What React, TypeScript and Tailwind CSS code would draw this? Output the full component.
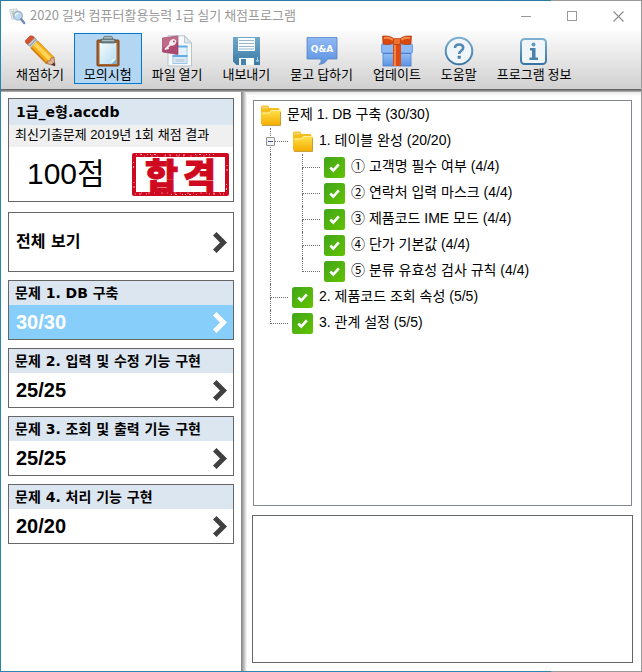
import type { ReactNode } from "react";

const malgun = "font-['Noto_Sans_CJK_KR','Noto_Sans',sans-serif]";
const gulim = "font-['Liberation_Sans','Noto_Sans_CJK_KR',sans-serif]";
const gulimBold = "font-['DejaVu_Sans','Noto_Sans_CJK_KR',sans-serif] font-bold";

function AppIcon() {
  return (
    <svg width="17" height="17" viewBox="0 0 17 17" aria-hidden="true">
      <path d="M.5 1.500 L8 .8 L11 9 L3 11.500 Z" fill="#e4e8ec" stroke="#c6ccd1" strokeWidth=".8" />
      <path d="M2.500 4 L5 3.600 M3 6 L5 5.700 M3.500 8 L5 7.800" stroke="#8cc897" strokeWidth="1.200" />
      <circle cx="9" cy="7.800" r="4.300" fill="#b9d9f3" stroke="#a3b1c6" strokeWidth="1.300" />
      <path d="M6.500 7.800 A2.600 2.600 0 0 1 9.500 5.300" stroke="#fff" strokeWidth="1.200" fill="none" />
      <path d="M12.200 11.200 L15.200 15" stroke="#7089b4" strokeWidth="2.400" strokeLinecap="round" />
    </svg>
  );
}

function PencilIcon() {
  return (
    <svg width="32" height="32" viewBox="0 0 32 32" aria-hidden="true">
      <path d="M1.500 5.500 L6 1 Q8 .3 10 2.200 L11.500 4 L4.500 10.200 L2 8 Q1 6.800 1.500 5.500Z" fill="#d9502e" stroke="#a83c22" strokeWidth=".6" />
      <path d="M4 9.500 L10.500 3 L13.500 5.800 L7 12.600Z" fill="#c9ced3" stroke="#82898f" strokeWidth=".6" />
      <path d="M5.700 11 L12.100 4.400" stroke="#6f767c" strokeWidth=".8" />
      <path d="M7 12.600 L13.500 5.800 L30 22.400 L31 30.500 L22.800 28.600Z" fill="#f6ad1c" />
      <path d="M9.500 10.200 L12 7.500 L28.600 23.800 L25.400 26.200Z" fill="#ffd65a" />
      <path d="M7 12.600 L22.800 28.600" stroke="#d27a08" strokeWidth="1.600" />
      <path d="M13.500 5.800 L30 22.400" stroke="#de8c0c" strokeWidth="1" />
      <path d="M22.800 28.600 L23.500 25.800 L26 25.800 L26.600 23.400 L30 22.400 L31 30.800Z" fill="#dfb18d" stroke="#8a5d45" strokeWidth=".7" />
      <path d="M27.300 29.800 L30.400 27.200 L31.200 31Z" fill="#4b2a28" />
    </svg>
  );
}

function ClipboardIcon() {
  return (
    <svg width="32" height="32" viewBox="0 0 32 32" aria-hidden="true">
      <defs>
        <linearGradient id="paper" x1="0" y1="0" x2="1" y2="1">
          <stop offset="0" stopColor="#f2fbfe" />
          <stop offset="1" stopColor="#b5dcf1" />
        </linearGradient>
      </defs>
      <rect x="5" y="5" width="22" height="26" rx="1" fill="#a8622b" stroke="#7b4018" />
      <path d="M7.500 8 H24.500 V29 H7.500Z" fill="url(#paper)" />
      <path d="M19 29 L24.500 23.500 V29Z" fill="#7fb4d2" />
      <path d="M19 29 L20 24.500 L24.500 23.500Z" fill="#e8f6fc" />
      <rect x="9" y="4" width="14" height="4" rx="1" fill="#6f8589" stroke="#4a5d62" strokeWidth=".7" />
      <path d="M11.500 4 V2.600 Q11.500 1.300 13 1.300 H19 Q20.500 1.300 20.500 2.600 V4Z" fill="#a7b7b9" stroke="#56686c" strokeWidth=".7" />
      <path d="M10 5.400 H22" stroke="#b9c9cb" />
    </svg>
  );
}

function AccessIcon() {
  return (
    <svg width="32" height="32" viewBox="0 0 32 32" aria-hidden="true">
      <path d="M7 .8 H23.500 L30.500 8 V31 H7Z" fill="#f7fafd" stroke="#b9c3cc" />
      <path d="M23.500 .8 V8 H30.500Z" fill="#dfe6ec" stroke="#b3bec8" strokeWidth=".8" />
      <rect x="14" y="11.500" width="12" height="9" fill="#e5f1fb" stroke="#9ec9e8" />
      <path d="M13.500 11.500 H26.500" stroke="#62aee0" strokeWidth="2" />
      <rect x="12" y="21" width="14" height="7.500" fill="#dbe9f6" stroke="#9ec9e8" />
      <path d="M11.500 21 H26.500" stroke="#62aee0" strokeWidth="2" />
      <path d="M14.500 25.500 H23.500" stroke="#c3d5e3" strokeWidth="3" />
      <path d="M1.500 3 L17 1 V19.500 L1.500 17Z" fill="#ae4a70" stroke="#8e3558" strokeWidth=".6" />
      <path d="M1.500 3 L17 1 V7 L1.500 13Z" fill="#c77895" opacity=".7" />
      <path d="M8 8.500 Q8.500 4.500 12.500 4 Q16 4.500 15 8 Q13.500 11.500 9.500 10.500Z" fill="#f8edf1" />
      <path d="M9.500 9.500 L4 14.500 M6 12.500 L7.500 14" stroke="#f8edf1" strokeWidth="1.800" fill="none" />
      <circle cx="13" cy="6.500" r="1" fill="#ae4a70" />
    </svg>
  );
}

function FloppyIcon() {
  return (
    <svg width="32" height="32" viewBox="0 0 32 32" aria-hidden="true">
      <defs>
        <linearGradient id="disk" x1="0" y1="0" x2="0" y2="1">
          <stop offset="0" stopColor="#6fa9cc" />
          <stop offset="1" stopColor="#3c7aa5" />
        </linearGradient>
      </defs>
      <path d="M3 2 H30 V30 H6.500 L3 26.500Z" fill="url(#disk)" />
      <path d="M8 3 H25 V16 H8Z" fill="#f8fcfe" />
      <path d="M9 5.500 H24 M9 8.500 H24 M9 11.500 H24 M9 14 H24" stroke="#9db8c8" />
      <path d="M9 23 H24 V30 H9Z" fill="#f5fafd" />
      <path d="M11 24 H16 V30 H11Z" fill="#4681aa" />
      <path d="M27.500 22 V26 M26 25 L27.500 27 L29 25" stroke="#a5cbe2" fill="none" />
    </svg>
  );
}

function QnaIcon() {
  return (
    <svg width="32" height="32" viewBox="0 0 32 32" aria-hidden="true">
      <defs>
        <linearGradient id="bubble" x1="0" y1="0" x2="0" y2="1">
          <stop offset="0" stopColor="#8fb9f4" />
          <stop offset="1" stopColor="#5a92e0" />
        </linearGradient>
      </defs>
      <path d="M1 2.500 H31 V24 H21.500 Q20 28.500 13 29.500 Q16 27.500 15 24 H1Z" fill="url(#bubble)" stroke="#5581c0" strokeWidth=".8" />
      <text x="16" y="17" textAnchor="middle" fontSize="9" fontWeight="700" fill="#fff" fontFamily="DejaVu Sans, sans-serif">Q&amp;A</text>
    </svg>
  );
}

function GiftIcon() {
  return (
    <svg width="34" height="32" viewBox="0 0 34 32" aria-hidden="true">
      <defs>
        <linearGradient id="box" x1="0" y1="0" x2="0" y2="1">
          <stop offset="0" stopColor="#9dc6fa" />
          <stop offset="1" stopColor="#5b93e2" />
        </linearGradient>
      </defs>
      <rect x="3" y="16" width="28" height="15" fill="url(#box)" stroke="#4a7fce" strokeWidth=".8" />
      <rect x="1.500" y="9" width="31" height="9" rx="1" fill="#8db9f5" stroke="#5e91da" strokeWidth=".8" />
      <path d="M3 18.500 H31" stroke="#4a80cd" />
      <rect x="13" y="9" width="8" height="22" fill="#dd4b16" />
      <path d="M15 10 V31" stroke="#f58342" strokeWidth="2" />
      <path d="M16 6 C11 0 7 1 2.500 1 L3 9 C8 10 12 10 16 6Z" fill="#d9480f" stroke="#a83308" strokeWidth=".6" />
      <path d="M18 6 C23 0 27 1 31.500 1 L31 9 C26 10 22 10 18 6Z" fill="#d9480f" stroke="#a83308" strokeWidth=".6" />
      <path d="M4 3 Q9 2 13 5 M30 3 Q25 2 21 5" stroke="#f58a4a" strokeWidth="1.800" fill="none" />
      <rect x="13.500" y="3.500" width="7" height="6" rx="1.500" fill="#f07030" stroke="#b33c0c" strokeWidth=".7" />
    </svg>
  );
}

function BlueRingGradient({ id }: { id: string }) {
  return (
    <defs>
      <linearGradient id={id} x1="0" y1="0" x2="0" y2="1">
        <stop offset="0" stopColor="#7db0d0" />
        <stop offset="1" stopColor="#3874a3" />
      </linearGradient>
    </defs>
  );
}

function HelpIcon() {
  return (
    <svg width="32" height="32" viewBox="0 0 32 32" aria-hidden="true">
      <BlueRingGradient id="help" />
      <circle cx="16" cy="16" r="13.300" fill="#eff5f9" stroke="url(#help)" strokeWidth="2" />
      <path d="M12 13 Q12 9.500 16 9.500 Q20.200 9.500 20.200 12.800 Q20.200 14.500 18 16 Q16.200 17.200 16.200 19" fill="none" stroke="#5289b1" strokeWidth="2.600" />
      <rect x="14.700" y="20.800" width="3" height="3" rx=".5" fill="#457fa9" />
    </svg>
  );
}

function InfoIcon() {
  return (
    <svg width="32" height="32" viewBox="0 0 32 32" aria-hidden="true">
      <BlueRingGradient id="info" />
      <rect x="3" y="4" width="25" height="25" rx="3.500" fill="#eff5f9" stroke="url(#info)" strokeWidth="2" />
      <circle cx="15.500" cy="9.500" r="2" fill="#6198bf" />
      <path d="M12 13 H17.500 V22.500 H20 V25 H11.500 V22.500 H14 V15.500 H12Z" fill="#4a82ac" />
    </svg>
  );
}

function FolderIcon() {
  return (
    <svg width="20" height="22" viewBox="0 0 20 22" className="shrink-0" aria-hidden="true">
      <defs>
        <linearGradient id="folder" x1="0" y1="0" x2="0" y2="1">
          <stop offset="0" stopColor="#ffe14a" />
          <stop offset="1" stopColor="#f4ac00" />
        </linearGradient>
      </defs>
      <path d="M0 3 Q0 1.500 1.500 1.500 H6.500 Q8 1.500 8 3 V4 H17 Q18.500 4 18.500 6 V20 H1 Q0 20 0 19Z" fill="#f3bd1c" />
      <path d="M1 2.500 H7 V4.500 H1Z" fill="#f7d36c" />
      <path d="M1.500 8.500 H8 L10 6 H18.500 Q20 6 20 7.500 V20 Q20 21.500 18.500 21.500 H2 Q.5 21.500 .5 20 V9.500Z" fill="url(#folder)" />
      <path d="M1 9 H8.500 L10.500 6.500 H19" stroke="#fff0a0" fill="none" />
      <path d="M1 21.500 H19.500 V8" stroke="#ba9338" fill="none" strokeWidth=".8" />
    </svg>
  );
}

function CheckIcon() {
  return (
    <svg width="21" height="21" viewBox="0 0 21 21" className="shrink-0" aria-label="정답" role="img">
      <defs>
        <linearGradient id="ok" x1="0" y1="0" x2="1" y2="1">
          <stop offset="0" stopColor="#41a51b" />
          <stop offset="1" stopColor="#62c300" />
        </linearGradient>
      </defs>
      <rect width="21" height="21" rx="2.500" fill="url(#ok)" />
      <path d="M6.300 10.500 L9.300 13.500 L14.800 7.300" stroke="#fff" strokeWidth="2.600" fill="none" />
    </svg>
  );
}

function Chevron() {
  return (
    <svg width="14" height="21" viewBox="0 0 14 21" className="shrink-0" aria-hidden="true">
      <path d="M0 3.500 L3.500 0 L14 10.500 L3.500 21 L0 17.500 L7 10.500Z" fill="currentColor" />
    </svg>
  );
}

const tools: { label: string; icon: ReactNode; active?: boolean }[] = [
  { label: "채점하기", icon: <PencilIcon /> },
  { label: "모의시험", icon: <ClipboardIcon />, active: true },
  { label: "파일 열기", icon: <AccessIcon /> },
  { label: "내보내기", icon: <FloppyIcon /> },
  { label: "묻고 답하기", icon: <QnaIcon /> },
  { label: "업데이트", icon: <GiftIcon /> },
  { label: "도움말", icon: <HelpIcon /> },
  { label: "프로그램 정보", icon: <InfoIcon /> },
];

const sections = [
  { title: "문제 1. DB 구축", score: "30/30", active: true },
  { title: "문제 2. 입력 및 수정 기능 구현", score: "25/25" },
  { title: "문제 3. 조회 및 출력 기능 구현", score: "25/25" },
  { title: "문제 4. 처리 기능 구현", score: "20/20" },
];

const details = [
  "① 고객명 필수 여부 (4/4)",
  "② 연락처 입력 마스크 (4/4)",
  "③ 제품코드 IME 모드 (4/4)",
  "④ 단가 기본값 (4/4)",
  "⑤ 분류 유효성 검사 규칙 (4/4)",
];

function Branch({ last = false }: { last?: boolean }) {
  return (
    <span className="flex h-full w-[22px] shrink-0 flex-col pr-1" aria-hidden="true">
      <span className="h-[14px] border-b border-l border-dotted border-[#707070]" />
      {!last && <span className="flex-1 border-l border-dotted border-[#707070]" />}
    </span>
  );
}

function TitleBar() {
  return (
    <header className="flex h-[30px] items-center bg-white pl-2 text-[#999]">
      <AppIcon />
      <h1 className={`ml-1 flex-1 truncate pb-[2px] text-[13px] leading-5 ${malgun}`}>2020 길벗 컴퓨터활용능력 1급 실기 채점프로그램</h1>
      <button type="button" aria-label="최소화" className="flex h-full w-[46px] items-center justify-center">
        <span className="h-px w-[10px] bg-[#999]" />
      </button>
      <button type="button" aria-label="최대화" className="flex h-full w-[46px] items-center justify-center">
        <span className="size-[10px] border border-[#999]" />
      </button>
      <button type="button" aria-label="닫기" className="flex h-full w-[46px] items-center justify-center">
        <svg width="11" height="11" viewBox="0 0 11 11" aria-hidden="true">
          <path d="M.5 .5 L10.500 10.500 M10.500 .5 L.5 10.500" stroke="#8c8c8c" strokeWidth="1.100" />
        </svg>
      </button>
    </header>
  );
}

function Summary() {
  return (
    <section className="border border-[#666]">
      <h2 className={`h-[26px] bg-[#dce6f0] px-[7px] text-[14px] leading-[26px] ${gulimBold}`}>1급_e형.accdb</h2>
      <p className={`h-[22px] truncate bg-[#f0f0f0] px-[6px] text-[13px] leading-[20px] ${gulim}`}>최신기출문제 2019년 1회 채점 결과</p>
      <div className="flex h-[54px] items-center justify-between pr-1 pl-[18px]">
        <strong className={`text-[30px] leading-[40px] font-normal ${gulim}`}>100점</strong>
        <span className="relative flex h-[43px] w-[97px] items-center justify-center rounded-[2px] border-[4px] border-[#cf0a20] text-[#cf0a20]">
          <span className={`flex gap-[5px] text-[36px] leading-[35px] font-black [-webkit-text-stroke:1px_#cf0a20] ${malgun}`}>
            <span>합</span>
            <span>격</span>
          </span>
          <svg className="absolute -inset-1 size-[97px] h-[43px]" viewBox="0 0 97 43" aria-hidden="true">
            <path d="M4 1.500 H24 M33 2 H55 M63 1.500 H82 M3 41 H17 M39 41.500 H66 M77 41 H92 M1.500 9 V18 M2 29 V37 M95 12 V21 M94.500 31 V38" stroke="#fff" strokeWidth="1" strokeDasharray="1 3 2 5 1 2" opacity=".65" />
            <path d="M12 3 H84 M9 40 H88" stroke="#fff" strokeWidth=".7" strokeDasharray="1 6 2 4" opacity=".6" />
          </svg>
        </span>
      </div>
    </section>
  );
}

function Sidebar() {
  return (
    <aside className="w-60 shrink-0 bg-white px-[7px] pt-[6px] pb-2">
      <div className="w-[226px]">
        <Summary />
        <nav aria-label="문제 목록" className="mt-[10px] flex flex-col gap-2">
          <button type="button" className="flex h-[60px] items-center justify-between border border-[#666] pr-[6px] pl-[7px] text-[#404040]">
            <span className={`text-[16px] leading-5 text-black ${gulimBold}`}>전체 보기</span>
            <Chevron />
          </button>
          {sections.map((s) => (
            <button type="button" key={s.title} className="h-[60px] border border-[#666] text-left">
              <span className={`block h-6 bg-[#dce6f0] px-[6px] text-[14px] leading-6 whitespace-nowrap ${gulimBold}`}>{s.title}</span>
              <span className={`flex h-[34px] items-center justify-between pr-[6px] pl-[7px] ${s.active ? "bg-[#87cefa] text-white" : "text-[#404040]"}`}>
                <span className={`text-[20px] leading-6 font-bold ${gulim} ${s.active ? "text-white" : "text-black"}`}>{s.score}</span>
                <Chevron />
              </span>
            </button>
          ))}
        </nav>
      </div>
    </aside>
  );
}

function ResultTree() {
  const row = "flex h-[26px] items-center whitespace-nowrap";
  const label = "ml-[6px] pb-[2px]";
  return (
    <section className={`h-[406px] overflow-auto border border-[#828790] pt-px text-[14px] leading-5 ${gulim}`}>
      <div className={`${row} pl-[7px]`}>
        <FolderIcon />
        <span className={label}>문제 1. DB 구축 (30/30)</span>
      </div>
      <ul className="pl-4">
        <li>
          <div className={row}>
            <span className="relative h-full">
              <Branch />
              <button type="button" aria-label="접기" className="absolute top-[9px] -left-1 flex size-[9px] items-center justify-center rounded-[1px] border border-[#919191] bg-[#f4f4f4]">
                <span className="h-px w-[5px] bg-[#3b5ba9]" />
              </button>
            </span>
            <span className="ml-px flex">
              <FolderIcon />
            </span>
            <span className={label}>1. 테이블 완성 (20/20)</span>
          </div>
          <ul className="border-l border-dotted border-[#707070] pl-[31px]">
            {details.map((text, i) => (
              <li key={text} className={row}>
                <Branch last={i === details.length - 1} />
                <CheckIcon />
                <span className={label}>{text}</span>
              </li>
            ))}
          </ul>
        </li>
        <li className={row}>
          <Branch />
          <CheckIcon />
          <span className={label}>2. 제품코드 조회 속성 (5/5)</span>
        </li>
        <li className={row}>
          <Branch last />
          <CheckIcon />
          <span className={label}>3. 관계 설정 (5/5)</span>
        </li>
      </ul>
    </section>
  );
}

export default function App() {
  return (
    <div className="flex min-h-screen flex-col border-r border-l border-r-[#999] border-l-[#2a84ae] bg-white text-black">
      <div className="h-px bg-linear-to-r from-[#2a7ca4] from-86% to-[#999] to-86%" />
      <TitleBar />
      <div className={`flex h-[58px] items-start bg-linear-to-b from-[#fcfcfc] to-[#d0d0d0] pt-[2px] pl-[5px] ${malgun}`} role="toolbar" aria-label="도구 모음">
        {tools.map((t) => (
          <button
            type="button"
            key={t.label}
            className={`flex h-[51px] shrink-0 flex-col items-center border px-[9px] pt-px text-[13px] leading-[14px] whitespace-nowrap ${t.active ? "border-[#0078d7] bg-[#b3d7f3]" : "border-transparent"}`}
          >
            {t.icon}
            <span>{t.label}</span>
          </button>
        ))}
      </div>
      <div className="h-[3px] bg-linear-to-b from-[#555] to-[#b8b8b8]" />
      <main className="flex flex-1">
        <Sidebar />
        <div className="w-[6px] shrink-0 bg-linear-to-r from-[#808080] to-white" />
        <div className="flex min-w-0 flex-1 flex-col gap-[9px] bg-linear-to-b from-[#e8e8e8] to-white to-[4px] pt-2 pr-2 pb-2 pl-[5px]">
          <div className="px-px">
            <ResultTree />
          </div>
          <section aria-label="상세 설명" className="min-h-[148px] flex-1 border border-[#666] bg-white" />
        </div>
      </main>
      <div className="h-px bg-linear-to-r from-[#2a84ae] from-86% to-[#999] to-86%" />
    </div>
  );
}
